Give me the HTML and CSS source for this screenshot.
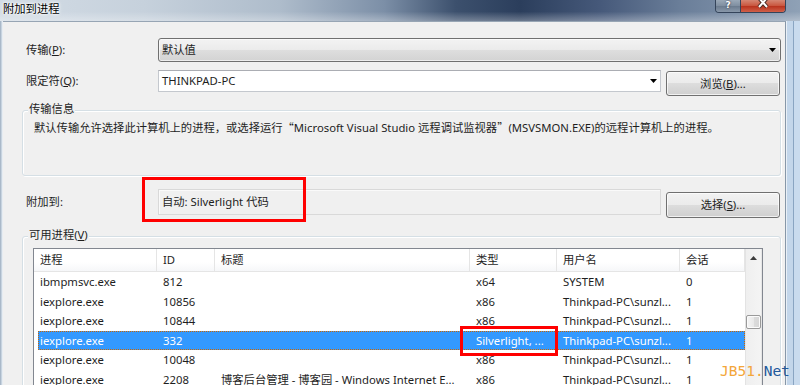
FILE: index.html
```html
<!DOCTYPE html>
<html lang="zh-CN">
<head>
<meta charset="utf-8">
<title>附加到进程</title>
<link rel="stylesheet" href="styles.css">
</head>
<body>
<div class="window">
  <div class="titlebar">
    <span class="title">附加到进程</span>
    <div class="caption">
      <span class="cbtn help">?</span>
      <span class="cbtn close">
        <svg width="44" height="13" viewBox="0 0 44 13">
          <path d="M18 -2 L26 7 M26 -2 L18 7" stroke="#4a2a24" stroke-width="4" fill="none"/>
          <path d="M18 -2 L26 7 M26 -2 L18 7" stroke="#ffffff" stroke-width="2" fill="none"/>
        </svg>
      </span>
    </div>
  </div>
  <div class="main">
    <div class="frame-left"></div>
    <div class="client">
      <div class="row r1">
        <span class="lbl">传输(<u>P</u>):</span>
        <div class="combo">默认值<svg class="arrow" width="7" height="4" viewBox="0 0 7 4"><path d="M0 0H7L3.5 4Z" fill="#000"/></svg></div>
      </div>
      <div class="row r2">
        <span class="lbl">限定符(<u>Q</u>):</span>
        <div class="input">THINKPAD-PC<svg class="arrow" width="7" height="4" viewBox="0 0 7 4"><path d="M0 0H7L3.5 4Z" fill="#000"/></svg></div>
        <span class="btn">浏览(<u>B</u>)...</span>
      </div>
      <div class="group info">
        <span class="legend">传输信息</span>
        <p class="info-text">默认传输允许选择此计算机上的进程，或选择运行<span class="q">“</span>Microsoft Visual Studio 远程调试监视器<span class="q">”</span>(MSVSMON.EXE)的远程计算机上的进程。</p>
      </div>
      <div class="row r3">
        <span class="lbl">附加到:</span>
        <div class="ro">自动: Silverlight 代码</div>
        <span class="btn">选择(<u>S</u>)...</span>
      </div>
      <div class="group procs">
        <span class="legend">可用进程(<u>V</u>)</span>
        <div class="list">
          <div class="lv-main">
            <div class="lv-head">
              <span class="h c1">进程</span>
              <span class="h c2">ID</span>
              <span class="h c3">标题</span>
              <span class="h c4">类型</span>
              <span class="h c5">用户名</span>
              <span class="h c6">会话</span>
            </div>
            <div class="lv-row">
              <span class="d c1">ibmpmsvc.exe</span><span class="d c2">812</span><span class="d c3"></span><span class="d c4">x64</span><span class="d c5">SYSTEM</span><span class="d c6">0</span>
            </div>
            <div class="lv-row">
              <span class="d c1">iexplore.exe</span><span class="d c2">10856</span><span class="d c3"></span><span class="d c4">x86</span><span class="d c5">Thinkpad-PC\sunzl...</span><span class="d c6">1</span>
            </div>
            <div class="lv-row">
              <span class="d c1">iexplore.exe</span><span class="d c2">10844</span><span class="d c3"></span><span class="d c4">x86</span><span class="d c5">Thinkpad-PC\sunzl...</span><span class="d c6">1</span>
            </div>
            <div class="lv-row selected">
              <span class="d c1">iexplore.exe</span><span class="d c2">332</span><span class="d c3"></span><span class="d c4">Silverlight, ...</span><span class="d c5">Thinkpad-PC\sunzl...</span><span class="d c6">1</span>
            </div>
            <div class="lv-row">
              <span class="d c1">iexplore.exe</span><span class="d c2">10048</span><span class="d c3"></span><span class="d c4">x86</span><span class="d c5">Thinkpad-PC\sunzl...</span><span class="d c6">1</span>
            </div>
            <div class="lv-row">
              <span class="d c1">iexplore.exe</span><span class="d c2">2208</span><span class="d c3">博客后台管理 - 博客园 - Windows Internet E...</span><span class="d c4">x86</span><span class="d c5">Thinkpad-PC\sunzl...</span><span class="d c6">1</span>
            </div>
          </div>
          <div class="scrollbar">
            <div class="sb-up"><svg width="7" height="4" viewBox="0 0 7 4"><path d="M0 4H7L3.5 0Z" fill="#3c3c3c"/></svg></div>
            <div class="sb-thumb"></div>
          </div>
        </div>
      </div>
      <div class="annot a1"></div>
      <div class="annot a2"></div>
    </div>
    <div class="frame-right"></div>
  </div>
  <div class="watermark"><span class="wm-o">JB51.</span><span class="wm-b">Net</span></div>
</div>
</body>
</html>
```

FILE: styles.css
```css
* { box-sizing: border-box; }
html, body { margin: 0; padding: 0; }
body {
  width: 800px;
  height: 385px;
  overflow: hidden;
  font-family: "Noto Sans", "Noto Sans CJK SC", sans-serif;
  font-size: 11.3px;
  color: #1e1e1e;
  background: #f0f0f0;
}
u { text-decoration: underline; text-underline-offset: 1px; }

.window {
  width: 800px;
  height: 385px;
  position: relative;
  overflow: hidden;
  display: flex;
  flex-direction: column;
}

/* title bar */
.titlebar {
  height: 21px;
  flex: none;
  display: flex;
  justify-content: space-between;
  align-items: flex-start;
  background:
    linear-gradient(to bottom, rgba(255,255,255,0) 0, rgba(255,255,255,0) 55%, rgba(255,255,255,0.3) 100%),
    linear-gradient(to right, #d3dce5 0%, #c6d1dc 18%, #aebccb 35%, #7c8fa7 48%, #3c506d 57%, #2b3e5c 65%, #46597a 75%, #6a7e99 85%, #8fa1b6 100%);
}
.title {
  padding-left: 3px;
  line-height: 18px;
  color: #000;
  text-shadow: 0 0 5px #fff, 0 0 3px #fff, 0 0 2px #fff;
}
.caption {
  display: flex;
  margin-right: 14px;
  height: 13px;
  border: 1px solid #34445a;
  border-top: none;
  border-radius: 0 0 4px 4px;
  overflow: hidden;
}
.cbtn { display: block; height: 12px; }
.help {
  width: 25px;
  border-right: 1px solid #34445a;
  background: linear-gradient(to bottom, #9aa8b7, #7f8ea0 50%, #6b7b8e 51%, #8998aa);
  color: #fff;
  font-family: "DejaVu Sans", sans-serif;
  font-weight: bold;
  font-size: 9px;
  line-height: 11px;
  text-align: center;
  text-shadow: 0 0 2px #223;
}
.close {
  width: 44px;
  background: linear-gradient(to bottom, #d58673, #c9543c 50%, #b8321c 51%, #d0604a);
}
.close svg { display: block; }

/* frame */
.main { flex: 1; display: flex; min-height: 0; }
.frame-left {
  width: 3px;
  flex: none;
  background: linear-gradient(to right, #aab9c9 0, #aab9c9 1px, #c7d3df 1px, #c7d3df 2px, #e6ecf2 2px);
}
.client {
  width: 783px;
  flex: none;
  border-top: 1px solid #97a5b4;
  border-right: 1px solid #8797a8;
  position: relative;
  overflow: hidden;
  background: #f0f0f0;
}
.frame-right {
  flex: 1;
  background: linear-gradient(to right, #e9f0f7 0, #e9f0f7 1px, #c3d6ea 1px, #c3d6ea 7px, #8aa5c2 7px, #8aa5c2 8px, #c9dbee 8px);
}

/* rows */
.row {
  display: flex;
  align-items: flex-start;
  padding-left: 23px;
}
.lbl { width: 132px; flex: none; }
.r1 { margin-top: 16px; height: 24px; }
.r1 .lbl { line-height: 24px; }
.r2 { margin-top: 8px; height: 26px; }
.r2 .lbl { line-height: 22px; }
.r3 { margin-top: 13px; height: 29px; }
.r3 .lbl { line-height: 25px; }

.combo {
  width: 623px;
  height: 24px;
  border: 1px solid #707070;
  border-radius: 3px;
  background: linear-gradient(to bottom, #f3f3f3 0, #ebebeb 50%, #dedede 50%, #d3d3d3 100%);
  box-shadow: inset 0 0 0 1px rgba(255,255,255,0.6);
  padding-left: 3px;
  line-height: 22px;
  display: flex;
  justify-content: space-between;
  align-items: center;
  padding-right: 4px;
}
.input {
  width: 503px;
  height: 22px;
  border: 1px solid #c4c8ce;
  border-top-color: #abadb3;
  background: #fff;
  padding-left: 3px;
  padding-right: 3px;
  line-height: 20px;
  display: flex;
  justify-content: space-between;
  align-items: center;
}
.btn {
  display: block;
  width: 114px;
  height: 25px;
  margin-left: 5px;
  margin-top: 1px;
  border: 1px solid #707070;
  border-radius: 3px;
  background: linear-gradient(to bottom, #f2f2f2 0, #ebebeb 50%, #dddddd 50%, #cfcfcf 100%);
  box-shadow: inset 0 0 0 1px rgba(255,255,255,0.7);
  text-align: center;
  line-height: 23px;
}
.r3 .btn { margin-top: 3px; height: 26px; line-height: 24px; }
.ro {
  width: 503px;
  height: 26px;
  border: 1px solid #d9d9d9;
  box-shadow: inset 1px 1px 0 #fafafa;
  padding-left: 3px;
  line-height: 24px;
}

/* group boxes */
.group {
  margin-left: 19px;
  width: 759px;
  border: 1px solid #d5dfe5;
  border-radius: 3px;
  box-shadow: inset 1px 1px 0 #fff, 1px 1px 0 #fff;
}
.legend {
  display: block;
  width: fit-content;
  margin: -9px 0 0 5px;
  padding: 0 1px;
  height: 14px;
  line-height: 14px;
  background: #f0f0f0;
}
.info { margin-top: 14px; height: 66px; }
.info-text {
  margin: 4px 0 0 11px;
  line-height: 14px;
  white-space: nowrap;
}
.q { font-family: "Noto Sans CJK SC", sans-serif; }
.procs { margin-top: 18px; height: 200px; }

/* list view */
.list {
  margin: 6px 0 0 10px;
  width: 730px;
  height: 170px;
  border: 1px solid #828790;
  background: #fff;
  display: flex;
}
.lv-main { width: 711px; flex: none; }
.lv-head {
  display: flex;
  height: 23px;
  border-bottom: 1px solid #e5e5e5;
  background: linear-gradient(to bottom, #ffffff 0, #ffffff 60%, #f6f7f9 100%);
}
.h {
  display: block;
  flex: none;
  height: 22px;
  line-height: 22px;
  padding-left: 6px;
  border-right: 1px solid #e5e5e5;
  white-space: nowrap;
}
.h.c1 { width: 123px; }
.c2 { width: 58px; }
.c3 { width: 255px; }
.c4 { width: 87px; }
.c5 { width: 123px; }
.c6 { width: 65px; }

.lv-row {
  display: flex;
  height: 19.5px;
  margin-left: 4px;
  line-height: 19.5px;
}
.d {
  display: block;
  flex: none;
  padding-left: 6px;
  white-space: nowrap;
}
.d.c3 { overflow: hidden; }
.d.c1 { width: 119px; padding-left: 2px; }
.lv-row.selected {
  background: #3399ff;
  color: #fff;
  outline: 1px dotted #cc6600;
  outline-offset: -1px;
}

.scrollbar {
  width: 17px;
  flex: none;
  background: linear-gradient(to right, #e3e3e3 0, #e3e3e3 1px, #efefef 1px, #f4f4f4 16px, #e6e6e6 16px);
}
.sb-up {
  height: 17px;
  display: flex;
  justify-content: center;
  align-items: center;
  padding-top: 1px;
}
.sb-up svg { display: block; }
.sb-thumb {
  margin: 49px 0 0 1px;
  width: 15px;
  height: 14px;
  border: 1px solid #9a9a9a;
  border-radius: 2px;
  background: linear-gradient(to right, #f5f5f5, #e9e9e9 50%, #dcdcdc 50%, #d6d6d6);
  box-shadow: inset 0 0 0 1px #fbfbfb;
}

/* annotations */
.annot {
  position: absolute;
  border: 3px solid #ff0000;
}
.a1 { left: 139px; top: 155px; width: 164px; height: 45px; }
.a2 { left: 457px; top: 304px; width: 98px; height: 30px; }

.watermark {
  position: absolute;
  left: 720px;
  top: 362px;
  font-family: "DejaVu Sans Mono", monospace;
  font-size: 14.5px;
  line-height: 18px;
  white-space: nowrap;
}
.wm-o { color: #f3a63a; }
.wm-b { color: #22599b; }
```
